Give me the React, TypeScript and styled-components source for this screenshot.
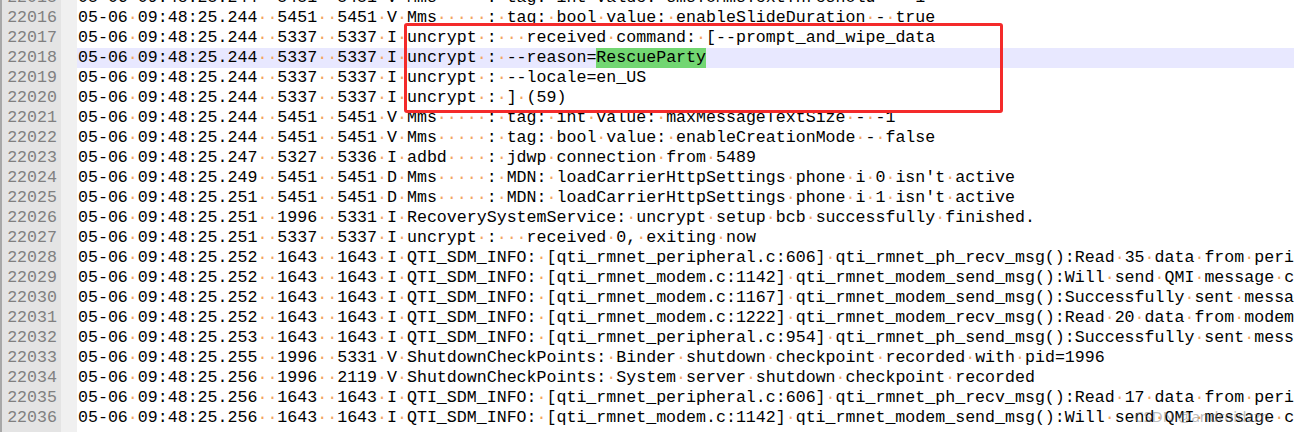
import styled, { createGlobalStyle } from "styled-components";

const GlobalStyle = createGlobalStyle`
  html, body {
    margin: 0;
    padding: 0;
    background: #ffffff;
    overflow: hidden;
  }
`;

const Page = styled.div`
  position: relative;
  width: 1294px;
  height: 432px;
  overflow: hidden;
  background: #ffffff;
  font-family: "Liberation Mono", "Courier New", monospace;
  font-size: 16.63px;
`;

const List = styled.div`
  display: flex;
  flex-direction: column;
  margin-top: -12px;
`;

const Row = styled.div<{ $filler?: boolean }>`
  display: grid;
  grid-template-columns: 61px 16px 1fr;
  height: ${(p) => (p.$filler ? "40px" : "20px")};
  line-height: 20px;
`;

const LineNo = styled.div`
  box-sizing: border-box;
  border-left: 2px solid #a8a8a8;
  background: #e4e4e4;
  color: #808080;
  text-align: right;
  padding-right: 4px;
`;

const Fold = styled.div`
  background: #f0f0f0;
`;

const Code = styled.div<{ $current?: boolean }>`
  padding-left: 1px;
  white-space: pre;
  overflow: hidden;
  color: #000000;
  background: ${(p) => (p.$current ? "#e8e8ff" : "transparent")};
`;

const Ws = styled.span`
  color: #f4a460;
`;

const Mark = styled.span`
  display: inline-block;
  height: 20px;
  vertical-align: top;
  background: #72d672;
`;

const Annotation = styled.div`
  position: absolute;
  left: 404px;
  top: 23px;
  width: 599px;
  height: 90px;
  box-sizing: border-box;
  border: 3px solid #f42a2a;
  border-radius: 3px;
  pointer-events: none;
`;

const Watermark = styled.div`
  position: absolute;
  left: 1134px;
  top: 406px;
  font-family: "Noto Sans", "Noto Sans CJK SC", sans-serif;
  font-size: 15px;
  color: rgba(120, 120, 120, 0.5);
  white-space: nowrap;
`;

type Line = { n: number; text: string; current?: boolean; mark?: string };

const log = (ts: string, pid: string, tid: string, lvl: string, tag: string, msg: string) =>
  `05-06 09:48:${ts} ${pid.padStart(5)} ${tid.padStart(5)} ${lvl} ${tag.padEnd(8)}: ${msg}`;

const lines: Line[] = [
  { n: 22015, text: log("25.244", "5451", "5451", "V", "Mms", "tag: int value: smsToMmsTextThreshold - -1") },
  { n: 22016, text: log("25.244", "5451", "5451", "V", "Mms", "tag: bool value: enableSlideDuration - true") },
  { n: 22017, text: log("25.244", "5337", "5337", "I", "uncrypt", "  received command: [--prompt_and_wipe_data") },
  { n: 22018, text: log("25.244", "5337", "5337", "I", "uncrypt", "--reason=RescueParty"), current: true, mark: "RescueParty" },
  { n: 22019, text: log("25.244", "5337", "5337", "I", "uncrypt", "--locale=en_US") },
  { n: 22020, text: log("25.244", "5337", "5337", "I", "uncrypt", "] (59)") },
  { n: 22021, text: log("25.244", "5451", "5451", "V", "Mms", "tag: int value: maxMessageTextSize - -1") },
  { n: 22022, text: log("25.244", "5451", "5451", "V", "Mms", "tag: bool value: enableCreationMode - false") },
  { n: 22023, text: log("25.247", "5327", "5336", "I", "adbd", "jdwp connection from 5489") },
  { n: 22024, text: log("25.249", "5451", "5451", "D", "Mms", "MDN: loadCarrierHttpSettings phone i 0 isn't active") },
  { n: 22025, text: log("25.251", "5451", "5451", "D", "Mms", "MDN: loadCarrierHttpSettings phone i 1 isn't active") },
  { n: 22026, text: log("25.251", "1996", "5331", "I", "RecoverySystemService", "uncrypt setup bcb successfully finished.") },
  { n: 22027, text: log("25.251", "5337", "5337", "I", "uncrypt", "  received 0, exiting now") },
  { n: 22028, text: log("25.252", "1643", "1643", "I", "QTI_SDM_INFO", "[qti_rmnet_peripheral.c:606] qti_rmnet_ph_recv_msg():Read 35 data from peripheral") },
  { n: 22029, text: log("25.252", "1643", "1643", "I", "QTI_SDM_INFO", "[qti_rmnet_modem.c:1142] qti_rmnet_modem_send_msg():Will send QMI message clients") },
  { n: 22030, text: log("25.252", "1643", "1643", "I", "QTI_SDM_INFO", "[qti_rmnet_modem.c:1167] qti_rmnet_modem_send_msg():Successfully sent message") },
  { n: 22031, text: log("25.252", "1643", "1643", "I", "QTI_SDM_INFO", "[qti_rmnet_modem.c:1222] qti_rmnet_modem_recv_msg():Read 20 data from modem") },
  { n: 22032, text: log("25.253", "1643", "1643", "I", "QTI_SDM_INFO", "[qti_rmnet_peripheral.c:954] qti_rmnet_ph_send_msg():Successfully sent message") },
  { n: 22033, text: log("25.255", "1996", "5331", "V", "ShutdownCheckPoints", "Binder shutdown checkpoint recorded with pid=1996") },
  { n: 22034, text: log("25.256", "1996", "2119", "V", "ShutdownCheckPoints", "System server shutdown checkpoint recorded") },
  { n: 22035, text: log("25.256", "1643", "1643", "I", "QTI_SDM_INFO", "[qti_rmnet_peripheral.c:606] qti_rmnet_ph_recv_msg():Read 17 data from peripheral") },
  { n: 22036, text: log("25.256", "1643", "1643", "I", "QTI_SDM_INFO", "[qti_rmnet_modem.c:1142] qti_rmnet_modem_send_msg():Will send QMI message clients") },
];

// spaces are shown as orange dots, like notepad++ "show white space"
const withDots = (s: string, key: string) =>
  s.split(/( +)/).map((part, i) =>
    part.startsWith(" ") ? <Ws key={key + i}>{"·".repeat(part.length)}</Ws> : part
  );

const CodeText = ({ text, mark }: { text: string; mark?: string }) => {
  if (!mark) return <>{withDots(text, "t")}</>;
  const at = text.indexOf(mark);
  return (
    <>
      {withDots(text.slice(0, at), "a")}
      <Mark>{mark}</Mark>
      {withDots(text.slice(at + mark.length), "b")}
    </>
  );
};

const App = () => {
  return (
    <Page>
      <GlobalStyle />
      <List>
        {lines.map((l) => (
          <Row key={l.n}>
            <LineNo>{l.n}</LineNo>
            <Fold />
            <Code $current={l.current}>
              <CodeText text={l.text} mark={l.mark} />
            </Code>
          </Row>
        ))}
        <Row $filler>
          <LineNo />
          <Fold />
          <Code />
        </Row>
      </List>
      <Annotation />
      <Watermark>CSDN @androidzzn</Watermark>
    </Page>
  );
};

export default App;
